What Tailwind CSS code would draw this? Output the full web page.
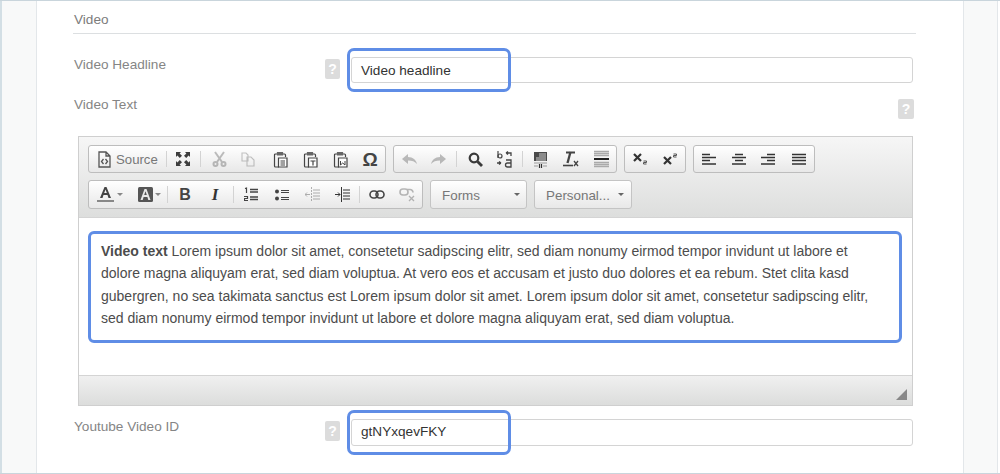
<!DOCTYPE html>
<html lang="en">

<head>
  <meta charset="UTF-8">
  <title>Video</title>
  <script src="https://cdn.jsdelivr.net/npm/@tailwindcss/browser@4"></script>
</head>

<body class="bg-white font-['Liberation_Sans',Arial,sans-serif]">
  <div class="w-[1000px] h-[474px] flex overflow-hidden border-y border-[#c9d5dc]">
    <div class="w-[37px] bg-[#f8f9f9] border-l-2 border-r border-l-[#d3dfe5] border-r-[#e3e7ea]"></div>

    <main class="w-[926px] pl-[36px] bg-white">
      <div class="w-[843px] h-[33px] border-b border-[#dcdfe1] pt-[6px] flex items-center pl-px text-[13.6px] text-[#7c7c7c]">Video</div>

      <!-- headline -->
      <div class="flex mt-[23px] h-[26px]">
        <label class="w-[251px] ml-px text-[13.6px] leading-[15px] text-[#858585]">Video Headline</label>
        <span class="mt-[2px] w-[15px] h-[20px] rounded-[2px] bg-[#dcdcdc] text-white text-[14px] leading-[20px] font-bold text-center">?</span>
        <div class="relative ml-[11px] w-[562px] h-[26px] border border-[#d4d4d4] rounded-[3px] pl-[9px] text-[13.6px] leading-[25px] text-[#333]">
          Video headline
          <div class="absolute -left-[5px] -top-[10px] w-[164px] h-[44px] border-[3px] border-[#5f8de6] rounded-[7px]"></div>
        </div>
      </div>

      <!-- text -->
      <div class="flex justify-between w-[840px] mt-[16px] h-[20px] ml-px">
        <label class="text-[13.6px] leading-[11px] text-[#858585]">Video Text</label>
        <span class="w-[16px] h-[20px] rounded-[2px] bg-[#dcdcdc] text-white text-[14px] leading-[20px] font-bold text-center">?</span>
      </div>

      <!-- editor -->
      <div class="ml-[5px] mt-[17px] w-[835px] h-[270px] border border-[#cfcfcf] flex flex-col">
        <div class="h-[81px] bg-gradient-to-b from-[#f6f6f6] to-[#dddedd] border-b border-[#d4d4d4] pl-[9px] pt-[8px] flex flex-col gap-[7px]">
          <div class="flex gap-[7px] h-[28px]">
            <div class="w-[298px] flex items-stretch border border-[#bdbdbd] rounded-[3px] bg-gradient-to-b from-white to-[#e8e8e8]">
              <div class="w-[77px] flex items-center pl-[8px] gap-[4px]">
                <svg width="15" height="17" viewBox="0 0 15 17" fill="none" stroke="#555" stroke-width="1.300"><path d="M2 1h7l4 4v11H2zM9 1v4h4"/><path d="M6.500 8 4.500 10.500 6.500 13M8.500 8l2 2.500-2 2.500" stroke-width="1.300"/></svg>
                <span class="pt-[2px] text-[13.2px] text-[#777]">Source</span>
              </div>
              <div class="w-px my-[5px] bg-[#d3d3d3]"></div>
              <div class="w-[34px] flex items-center justify-center">
                <svg width="16" height="16" viewBox="0 0 16 16" fill="#3d3d3d"><path d="M1 1h5L4.600 2.400 7 4.800 4.800 7 2.400 4.600 1 6zM15 1v5l-1.400-1.400L11.200 7 9 4.800l2.400-2.400L10 1zM1 15v-5l1.400 1.400L4.800 9 7 11.200l-2.400 2.400L6 15zM15 15h-5l1.400-1.400L9 11.200 11.200 9l2.400 2.400L15 10z"/></svg>
              </div>
              <div class="w-px my-[5px] bg-[#d3d3d3]"></div>
              <div class="ml-[4px] w-[29px] flex items-center justify-center opacity-30">
                <svg width="15" height="16" viewBox="0 0 15 16" fill="none" stroke="#333" stroke-width="2"><path d="m3 1 7 10M12 1 5 11"/><circle cx="3.500" cy="13" r="2"/><circle cx="11.500" cy="13" r="2"/></svg>
              </div>
              <div class="w-[29px] flex items-center justify-center opacity-30">
                <svg width="14" height="15" viewBox="0 0 14 15" fill="none" stroke="#444" stroke-width="1.100"><path d="M1 1h4l2 2v6H1zM6 5h4l3 3v6H6z"/></svg>
              </div>
              <div class="w-[33px] pl-[2px] flex items-center justify-center">
                <svg width="15" height="17" viewBox="0 0 15 17" fill="none" stroke="#444" stroke-width="1.200"><path d="M4 3H2.500Q1.500 3 1.500 4v11q0 1 1 1H6M10 3h1.500q1 0 1 1v2"/><path d="M4.500 1.500h5V4h-5z" fill="#666" stroke="#666"/><path d="M5.500 7h8.500v9H5.500z" fill="#fff"/><path d="M7.500 10h4.500M7.500 12h4.500M7.500 14h4.500"/></svg>
              </div>
              <div class="w-[30px] flex items-center justify-center">
                <svg width="15" height="17" viewBox="0 0 15 17" fill="none" stroke="#444" stroke-width="1.200"><path d="M4 3H2.500Q1.500 3 1.500 4v11q0 1 1 1H6M10 3h1.500q1 0 1 1v2"/><path d="M4.500 1.500h5V4h-5z" fill="#666" stroke="#666"/><path d="M5.500 7h8.500v9H5.500z" fill="#fff"/><path d="M7.500 10h5M10 10v4.500"/></svg>
              </div>
              <div class="w-[30px] flex items-center justify-center">
                <svg width="15" height="17" viewBox="0 0 15 17" fill="none" stroke="#444" stroke-width="1.200"><path d="M4 3H2.500Q1.500 3 1.500 4v11q0 1 1 1H6M10 3h1.500q1 0 1 1v2"/><path d="M4.500 1.500h5V4h-5z" fill="#666" stroke="#666"/><path d="M5.500 7h8.500v9H5.500z" fill="#fff"/><path d="M7.500 10v4l2.200-2 2.300 2v-4" stroke-width="1"/></svg>
              </div>
              <div class="w-[30px] flex items-center justify-center text-[19px] leading-none text-[#444] font-bold">&#937;</div>
            </div>

            <div class="w-[224px] flex items-stretch border border-[#bdbdbd] rounded-[3px] bg-gradient-to-b from-white to-[#e8e8e8]">
              <div class="w-[30px] flex items-center justify-center opacity-30">
                <svg width="15" height="11" viewBox="0 0 15 11" fill="#333"><path d="M0 5 6 0v3c5 0 8 3 9 7-2-2.500-5-3.500-9-3.500V10z"/></svg>
              </div>
              <div class="w-[29px] flex items-center justify-center opacity-30">
                <svg width="15" height="11" viewBox="0 0 15 11" fill="#333"><path d="M15 5 9 0v3C4 3 1 6 0 10c2-2.500 5-3.500 9-3.500V10z"/></svg>
              </div>
              <div class="ml-[3px] w-px my-[5px] bg-[#d3d3d3]"></div>
              <div class="ml-[3px] w-[30px] flex items-center justify-center">
                <svg width="15" height="15" viewBox="0 0 15 15" fill="none" stroke="#3a3a3a" stroke-width="2.200"><circle cx="6" cy="6" r="4.300"/><path d="m9.500 9.500 4.500 4.500" stroke-width="2.800"/></svg>
              </div>
              <div class="w-[29px] flex items-center justify-center">
                <svg width="17" height="18" viewBox="0 0 17 18" fill="none" stroke="#444" stroke-width="1.200"><path d="M2 1v7"/><circle cx="4" cy="6" r="2"/><path d="M10 3h5v3M10 3l2-1.500M10 3l2 1.500M1 13h4M5 13l-2-1.500M5 13l-2 1.500M10 10h5v7h-3.500a1.800 1.800 0 0 1 0-4H15" stroke-width="1.300"/></svg>
              </div>
              <div class="ml-[3px] w-px my-[5px] bg-[#d3d3d3]"></div>
              <div class="ml-[2px] w-[30px] flex items-center justify-center">
                <svg width="15" height="17" viewBox="0 0 15 17"><path d="M1 1h13v9H1z" fill="#4a4a4a"/><path d="M6 3h7M6 5h7M3 7h10M3 9h10" stroke="#ccc"/><path d="M1 12h13" stroke="#999"/><path d="M1 15h4M10 15h4" stroke="#999"/><path d="M6.500 13v4M8.500 13v4" stroke="#333" stroke-width="1.200"/></svg>
              </div>
              <div class="w-[30px] flex items-center justify-center">
                <svg width="17" height="16" viewBox="0 0 17 16" fill="none" stroke="#444"><path d="M4 1.500h9" stroke-width="2"/><path d="M8.500 1 5.500 12" stroke-width="2.300"/><path d="M1 14.500h10" stroke-width="1.600"/><path d="m12 10 4 5M16 10l-4 5" stroke-width="1.300"/></svg>
              </div>
              <div class="ml-px w-[30px] flex items-center justify-center">
                <svg width="15" height="18" viewBox="0 0 15 18" fill="none"><path d="M0 1.500h15M0 3.500h15M0 5.500h15M0 12.500h15M0 14.500h15M0 16.500h15" stroke="#aaa" stroke-width="1.400"/><path d="M0 9h15" stroke="#222" stroke-width="2"/></svg>
              </div>
            </div>

            <div class="w-[62px] flex items-stretch border border-[#bdbdbd] rounded-[3px] bg-gradient-to-b from-white to-[#e8e8e8]">
              <div class="w-[30px] flex items-center justify-center">
                <svg width="15" height="12" viewBox="0 0 15 12" fill="none" stroke="#333"><path d="m1 1 7 7M8 1 1 8" stroke-width="2.200"/><path d="M10.500 8h3v1.500h-3V11h3" stroke="#555"/></svg>
              </div>
              <div class="w-[30px] flex items-center justify-center">
                <svg width="15" height="12" viewBox="0 0 15 12" fill="none" stroke="#333"><path d="m1 4 7 7M8 4l-7 7" stroke-width="2.200"/><path d="M10.500 1h3v1.500h-3V4h3" stroke="#555"/></svg>
              </div>
            </div>

            <div class="w-[122px] flex items-stretch border border-[#bdbdbd] rounded-[3px] bg-gradient-to-b from-white to-[#e8e8e8]">
              <div class="w-[30px] flex items-center justify-center">
                <svg width="14" height="13" viewBox="0 0 14 13" stroke="#333" stroke-width="1.500"><path d="M0 1.500h8M0 4.500h14M0 7.500h8M0 11h14"/></svg>
              </div>
              <div class="w-[30px] flex items-center justify-center">
                <svg width="14" height="13" viewBox="0 0 14 13" stroke="#333" stroke-width="1.500"><path d="M3 1.500h8M0 4.500h14M3 7.500h8M0 11h14"/></svg>
              </div>
              <div class="w-[30px] flex items-center justify-center">
                <svg width="14" height="13" viewBox="0 0 14 13" stroke="#333" stroke-width="1.500"><path d="M6 1.500h8M0 4.500h14M6 7.500h8M0 11h14"/></svg>
              </div>
              <div class="ml-px w-[30px] flex items-center justify-center">
                <svg width="14" height="13" viewBox="0 0 14 13" stroke="#333" stroke-width="1.500"><path d="M0 1.500h14M0 4.500h14M0 7.500h14M0 11h14"/></svg>
              </div>
            </div>
          </div>

          <div class="flex gap-[7px] h-[29px]">
            <div class="w-[335px] flex items-stretch border border-[#bdbdbd] rounded-[3px] bg-gradient-to-b from-white to-[#e8e8e8]">
              <div class="w-[39px] flex items-center pl-[8px] gap-[3px]">
                <svg width="17" height="17" viewBox="0 0 17 17"><path d="M3 12 7.500 1h2L14 12h-2.500l-1-3h-4l-1 3zM7.200 7h2.600L8.500 3.500z" fill="#444"/><path d="M0 15h17" stroke="#888" stroke-width="2"/></svg>
                <span class="w-0 h-0 border-x-[3px] border-t-[3px] border-x-transparent border-t-[#888]"></span>
              </div>
              <div class="w-[38px] flex items-center pl-[10px] gap-[2px]">
                <svg width="15" height="15" viewBox="0 0 15 15"><rect width="15" height="15" rx="1.500" fill="#555"/><path d="M2.500 13 6.500 2h2l4 11h-2.200l-.9-3H5.600l-.9 3zM6.200 8h2.600L7.500 4.200z" fill="#e8e8e8"/></svg>
                <span class="w-0 h-0 border-x-[3px] border-t-[3px] border-x-transparent border-t-[#888]"></span>
              </div>
              <div class="ml-px w-px my-[5px] bg-[#d3d3d3]"></div>
              <div class="ml-[2px] w-[30px] flex items-center justify-center text-[16px] font-bold leading-none text-[#444]">B</div>
              <div class="w-[30px] flex items-center justify-center text-[17px] font-bold italic leading-none text-[#333] font-['Liberation_Serif',serif]">I</div>
              <div class="ml-[3px] w-px my-[5px] bg-[#d3d3d3]"></div>
              <div class="ml-[2px] w-[30px] flex items-center justify-center">
                <svg width="14" height="15" viewBox="0 0 14 15" fill="none" stroke="#444" stroke-width="1.200"><path d="M1 1.500 2.500 1v5M0 9.500h3.500v2h-3v2h3.500"/><path d="M6 2.500h8M6 5h8M6 10h8M6 12.500h8" stroke-width="1.300"/></svg>
              </div>
              <div class="ml-px w-[30px] flex items-center justify-center">
                <svg width="14" height="12" viewBox="0 0 14 12"><circle cx="2" cy="2.500" r="2" fill="#444"/><circle cx="2" cy="9.500" r="2" fill="#444"/><path d="M6 1.500h8M6 3.500h8M6 8.500h8M6 10.500h8" stroke="#444" stroke-width="1.200"/></svg>
              </div>
              <div class="w-[30px] flex items-center justify-center opacity-40">
                <svg width="15" height="15" viewBox="0 0 15 15" fill="none" stroke="#444"><path d="M6.500 0v15" stroke-dasharray="2 1"/><path d="M0 7.500h5M2 5.500l-2 2 2 2M8 3h7M8 6h7M8 9h7M8 12h7"/></svg>
              </div>
              <div class="w-[30px] flex items-center justify-center">
                <svg width="15" height="15" viewBox="0 0 15 15" fill="none" stroke="#333"><path d="M6.500 0v15"/><path d="M0 7.500h5M3 5.500l2 2-2 2"/><path d="M8 3h7M8 6h7M8 9h7M8 12h7"/></svg>
              </div>
              <div class="ml-[2px] w-px my-[5px] bg-[#d3d3d3]"></div>
              <div class="ml-[2px] w-[30px] flex items-center justify-center">
                <svg width="16" height="9" viewBox="0 0 16 9" fill="none" stroke="#444" stroke-width="1.600"><rect x="1" y="1" width="8" height="7" rx="3.500"/><rect x="7" y="1" width="8" height="7" rx="3.500"/></svg>
              </div>
              <div class="w-[30px] flex items-center justify-center opacity-40">
                <svg width="16" height="14" viewBox="0 0 16 14" fill="none" stroke="#555" stroke-width="1.600"><rect x="1" y="1" width="8" height="6" rx="3"/><path d="M8 1.500h3a3 3 0 0 1 3 3"/><path d="m10 8 5 5M15 8l-5 5" stroke-width="1.300"/></svg>
              </div>
            </div>

            <div class="w-[97px] flex items-center justify-between border border-[#c4c4c4] rounded-[3px] bg-gradient-to-b from-white to-[#e8e8e8] pl-[11px] pr-[6px] text-[13.4px] text-[#777]">
              <span class="pt-[3px]">Forms</span>
              <span class="w-0 h-0 border-x-[3px] border-t-[3px] border-x-transparent border-t-[#666]"></span>
            </div>
            <div class="w-[98px] flex items-center justify-between border border-[#c4c4c4] rounded-[3px] bg-gradient-to-b from-white to-[#e8e8e8] pl-[11px] pr-[7px] text-[13.4px] text-[#777]">
              <span class="pt-[3px]">Personal...</span>
              <span class="w-0 h-0 border-x-[3px] border-t-[3px] border-x-transparent border-t-[#666]"></span>
            </div>
          </div>
        </div>

        <!-- content -->
        <div class="h-[157px] bg-white pt-[13px] pl-[9px]">
          <div class="w-[814px] h-[112px] border-[3px] border-[#5f8de6] rounded-[6px] pl-[10px] pt-[6px] text-[14px] leading-[22.300px] text-[#4c4c4c] whitespace-nowrap">
            <b>Video text</b> Lorem ipsum dolor sit amet, consetetur sadipscing elitr, sed diam nonumy eirmod tempor invidunt ut labore et<br>
            dolore magna aliquyam erat, sed diam voluptua. At vero eos et accusam et justo duo dolores et ea rebum. Stet clita kasd<br>
            gubergren, no sea takimata sanctus est Lorem ipsum dolor sit amet. Lorem ipsum dolor sit amet, consetetur sadipscing elitr,<br>
            sed diam nonumy eirmod tempor invidunt ut labore et dolore magna aliquyam erat, sed diam voluptua.
          </div>
        </div>

        <div class="relative flex-1 bg-gradient-to-b from-[#f0f0f0] to-[#dcdddc] border-t border-[#d4d4d4]">
          <svg class="absolute right-[5px] bottom-[5px]" width="11" height="11" viewBox="0 0 11 11"><path d="M11 0v11H0z" fill="#888"/></svg>
        </div>
      </div>

      <!-- youtube -->
      <div class="flex mt-[13px] h-[27px]">
        <label class="w-[251px] ml-px text-[13.6px] leading-[15px] text-[#858585]">Youtube Video ID</label>
        <span class="mt-[2px] w-[15px] h-[20px] rounded-[2px] bg-[#dcdcdc] text-white text-[14px] leading-[20px] font-bold text-center">?</span>
        <div class="relative ml-[11px] w-[562px] h-[27px] border border-[#d4d4d4] rounded-[3px] pl-[9px] text-[13.6px] leading-[23px] text-[#333]">
          gtNYxqevFKY
          <div class="absolute -left-[5px] -top-[10px] w-[164px] h-[45px] border-[3px] border-[#5f8de6] rounded-[7px]"></div>
        </div>
      </div>
    </main>

    <div class="w-[35px] bg-[#f8f9f9] border-x border-[#e3e7ea]"></div>
  </div>
</body>

</html>
